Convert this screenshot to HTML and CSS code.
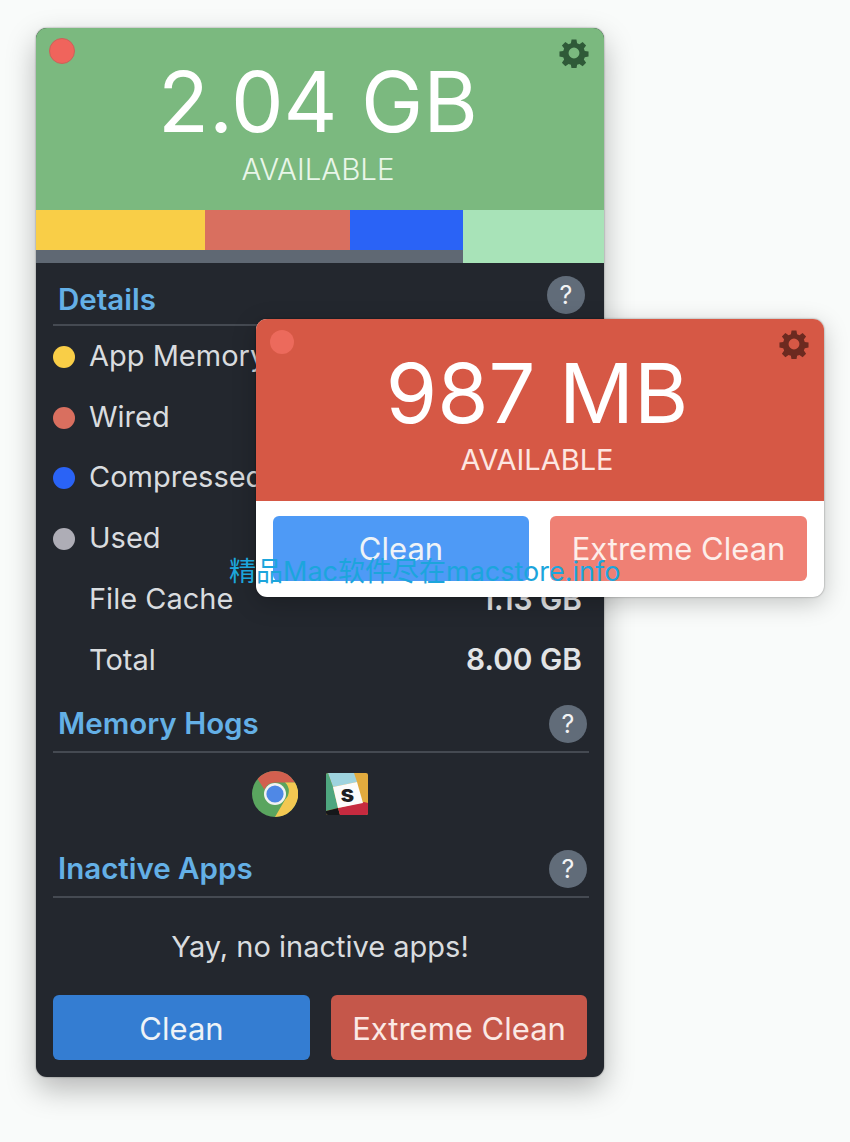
FILE: index.html
```html
<!DOCTYPE html>
<html lang="en">
<head>
<meta charset="utf-8">
<title>Memory Clean</title>
<link rel="stylesheet" href="styles.css">
</head>
<body>
<svg class="defs" width="0" height="0" aria-hidden="true">
  <symbol id="gear" viewBox="0 0 32 32">
    <path fill-rule="evenodd" d="M13.4 1.5h5.2l.7 4.1 2.5 1 3.4-2.4 3.7 3.7-2.4 3.4 1 2.5 4 .7v5.2l-4 .7-1 2.5 2.4 3.4-3.7 3.7-3.4-2.4-2.5 1-.7 4.1h-5.2l-.7-4.1-2.5-1-3.4 2.4-3.7-3.7 2.4-3.4-1-2.5-4-.7v-5.2l4-.7 1-2.5-2.4-3.4 3.7-3.7 3.4 2.4 2.5-1zM16 10.2a5.8 5.8 0 1 0 0 11.6 5.8 5.8 0 0 0 0-11.6z"/>
  </symbol>
</svg>

<main class="window main-window">
  <header class="hero hero-green">
    <span class="close close-green"></span>
    <svg class="gear gear-green"><use href="#gear"/></svg>
    <div class="amount">2.04 GB</div>
    <div class="label">AVAILABLE</div>
  </header>
  <div class="usage">
    <div class="usage-used">
      <div class="usage-bars">
        <span class="seg seg-app"></span>
        <span class="seg seg-wired"></span>
        <span class="seg seg-comp"></span>
      </div>
    </div>
    <div class="usage-free"></div>
  </div>
  <div class="body">
    <section class="section">
      <div class="section-head head-details">
        <h2>Details</h2>
        <span class="help help-details">?</span>
      </div>
      <ul class="rows">
        <li class="row"><span class="dot dot-app"></span><span class="name">App Memory</span></li>
        <li class="row"><span class="dot dot-wired"></span><span class="name">Wired</span></li>
        <li class="row"><span class="dot dot-comp"></span><span class="name">Compressed</span></li>
        <li class="row"><span class="dot dot-used"></span><span class="name">Used</span></li>
        <li class="row"><span class="dot dot-none"></span><span class="name">File Cache</span><span class="value">1.13 GB</span></li>
        <li class="row"><span class="dot dot-none"></span><span class="name">Total</span><span class="value">8.00 GB</span></li>
      </ul>
    </section>
    <section class="section">
      <div class="section-head">
        <h2>Memory Hogs</h2>
        <span class="help">?</span>
      </div>
      <div class="hogs">
        <svg class="app-icon chrome" viewBox="0 0 46 46" aria-label="Chrome">
          <circle cx="23" cy="23" r="23" fill="#5aa55f"/>
          <path d="M23 0a23 23 0 0 1 20 11.5H23a11.5 11.5 0 0 0-10.6 7L5.6 8A23 23 0 0 1 23 0z" fill="#d2604f"/>
          <path d="M43 11.5A23 23 0 0 1 23 46l10-17.3a11.5 11.5 0 0 0 0-17.2z" fill="#f3c852"/>
          <circle cx="23" cy="23" r="11" fill="#f2f2f2"/>
          <circle cx="23" cy="23" r="8.6" fill="#4f88e6"/>
        </svg>
        <svg class="app-icon slack" viewBox="0 0 42 42" aria-label="Slack">
          <rect width="42" height="42" rx="2" fill="#e2ab3e"/>
          <path d="M2 0h26l3 9L7 14z" fill="#9ed3de"/>
          <path d="M0 2a2 2 0 0 1 2-2l5 14 5 21-12 3z" fill="#4ea67f"/>
          <path d="M0 38l12-3 2 7H2a2 2 0 0 1-2-2z" fill="#15171a"/>
          <path d="M12 35l26-6 4 1v10a2 2 0 0 1-2 2H14z" fill="#c62a3f"/>
          <path d="M7 14l24-5 6 21-25 5z" fill="#fbfbfb"/>
          <text x="21.5" y="29" class="slack-s">s</text>
        </svg>
      </div>
    </section>
    <section class="section">
      <div class="section-head">
        <h2>Inactive Apps</h2>
        <span class="help">?</span>
      </div>
      <p class="empty">Yay, no inactive apps!</p>
    </section>
    <div class="actions actions-dark">
      <button class="btn btn-blue-dark">Clean</button>
      <button class="btn btn-red-dark">Extreme Clean</button>
    </div>
  </div>
</main>

<aside class="window popup-window">
  <header class="hero hero-red">
    <span class="close close-red"></span>
    <svg class="gear gear-red"><use href="#gear"/></svg>
    <div class="amount">987 MB</div>
    <div class="label">AVAILABLE</div>
  </header>
  <div class="actions actions-light">
    <button class="btn btn-blue-light">Clean</button>
    <button class="btn btn-red-light">Extreme Clean</button>
  </div>
</aside>

<div class="watermark">精品Mac软件尽在macstore.info</div>
</body>
</html>
```

FILE: styles.css
```css
* { box-sizing: border-box; }
html, body { margin: 0; height: 100%; }
body {
  position: relative;
  width: 850px;
  height: 1142px;
  overflow: hidden;
  background: #f9fbfa;
  font-family: Inter, "Noto Sans", sans-serif;
  color: #e6e8ea;
}
.defs { position: absolute; }

.window {
  position: absolute;
  overflow: hidden;
  border-radius: 11px;
}
.main-window {
  left: 36px;
  top: 28px;
  width: 568px;
  height: 1049px;
  background: #23272e;
  box-shadow: 0 12px 30px rgba(0, 0, 0, .28), 0 0 2px rgba(0, 0, 0, .45);
}
.popup-window {
  left: 256px;
  top: 319px;
  width: 568px;
  height: 278px;
  background: #fff;
  box-shadow: 0 6px 24px rgba(0, 0, 0, .22), 0 0 2px rgba(0, 0, 0, .45);
}

.hero {
  position: relative;
  height: 182px;
  padding-top: 27px;
  text-align: center;
  color: #fff;
}
.hero-green { background: #7bb97f; padding-right: 4px; }
.hero-red { background: #d65845; padding-right: 6px; }
.amount {
  font-size: 83.5px;
  line-height: 94px;
  font-weight: 400;
}
.hero-red .amount { font-size: 83px; }
.label {
  margin-top: 3px;
  font-size: 29.5px;
  line-height: 34px;
  font-weight: 350;
  color: #e9f6e9;
}
.hero-red .label { font-size: 29px; font-weight: 400; color: #fde6e1; }

.close {
  position: absolute;
  left: 13px;
  top: 10px;
  width: 26px;
  height: 26px;
  border-radius: 50%;
}
.close-green { background: #f0645c; border: 1px solid #c9625a; }
.close-red { left: 14px; top: 11px; width: 24px; height: 24px; background: #ec6a5c; }
.gear { position: absolute; width: 30px; height: 30px; }
.gear-green { right: 15px; top: 10px; fill: #2f5a38; }
.gear-red { right: 15px; top: 10px; fill: #6c2a20; }

.usage { display: flex; height: 53px; }
.usage-used { width: 427px; background: #5f6873; }
.usage-free { flex: 1; background: #a8e3b8; }
.usage-bars { display: flex; height: 40px; }
.seg { display: block; height: 100%; }
.seg-app { width: 169px; background: #f9ce47; }
.seg-wired { width: 145px; background: #d96f5f; }
.seg-comp { width: 113px; background: #2a63f6; }

.body { padding: 0 15px 0 17px; }
.section-head {
  display: flex;
  align-items: center;
  justify-content: space-between;
  height: 62px;
  padding: 4px 2px 0 5px;
  border-bottom: 2px solid #454a52;
}
.head-details { height: 63px; padding-top: 11px; padding-right: 4px; }
.section-head h2 {
  margin: 0;
  font-size: 29.5px;
  line-height: 34px;
  font-weight: 600;
  color: #64b0e6;
}
.help {
  flex: none;
  width: 38px;
  height: 38px;
  margin-top: 2px;
  border-radius: 50%;
  background: #616c79;
  color: #f2f3f4;
  font-size: 25px;
  line-height: 38px;
  text-align: center;
}
.help-details { margin-top: -8px; }

.rows { list-style: none; margin: 0; padding: 0; }
.row {
  display: flex;
  align-items: center;
  height: 60.8px;
  padding-right: 7px;
  font-size: 29px;
}
.dot { flex: none; width: 22px; height: 22px; margin: 1px 14px 0 0; border-radius: 50%; }
.dot-app { background: #f9ce47; }
.dot-wired { background: #d96f5f; }
.dot-comp { background: #2a63f6; }
.dot-used { background: #aeadb6; }
.dot-none { background: none; }
.name { flex: 1; margin-bottom: 2px; color: #d9dcdf; }
.value { margin-bottom: 2px; font-size: 29.8px; font-weight: 600; color: #e2e4e6; }

.hogs {
  display: flex;
  justify-content: center;
  align-items: center;
  gap: 28px;
  height: 83px;
  padding-right: 22px;
}
.app-icon { display: block; flex: none; }
.chrome { width: 46px; height: 46px; }
.slack { width: 42px; height: 42px; }
.slack-s { font-family: Inter, sans-serif; font-size: 24px; font-weight: 800; fill: #1c1e22; text-anchor: middle; }

.empty {
  margin: 0;
  height: 97px;
  padding: 31px 2px 0 0;
  text-align: center;
  font-size: 29px;
  line-height: 36px;
  color: #d9dcdf;
}

.actions { display: flex; justify-content: space-between; }
.btn {
  width: 257px;
  height: 65px;
  padding: 0;
  border: 0;
  border-radius: 6px;
  font-family: inherit;
  font-size: 31px;
  font-weight: 400;
  color: #eef3f7;
}
.actions-dark { padding-right: 2px; }
.actions-dark .btn { padding-top: 2px; }
.btn-blue-dark { background: #347dd2; }
.btn-red-dark { background: #c5574a; width: 256px; color: #fbe9e5; }
.actions-light { padding: 15px 17px 0; }
.btn-blue-light { width: 256px; background: #4e9af6; }
.btn-red-light { background: #ef8074; width: 257px; color: #fdeeea; }

.watermark {
  position: absolute;
  left: 229px;
  top: 554px;
  font-family: Inter, "Noto Sans CJK SC", sans-serif;
  font-size: 27px;
  line-height: 36px;
  color: #1ca5dc;
  white-space: nowrap;
}
```
